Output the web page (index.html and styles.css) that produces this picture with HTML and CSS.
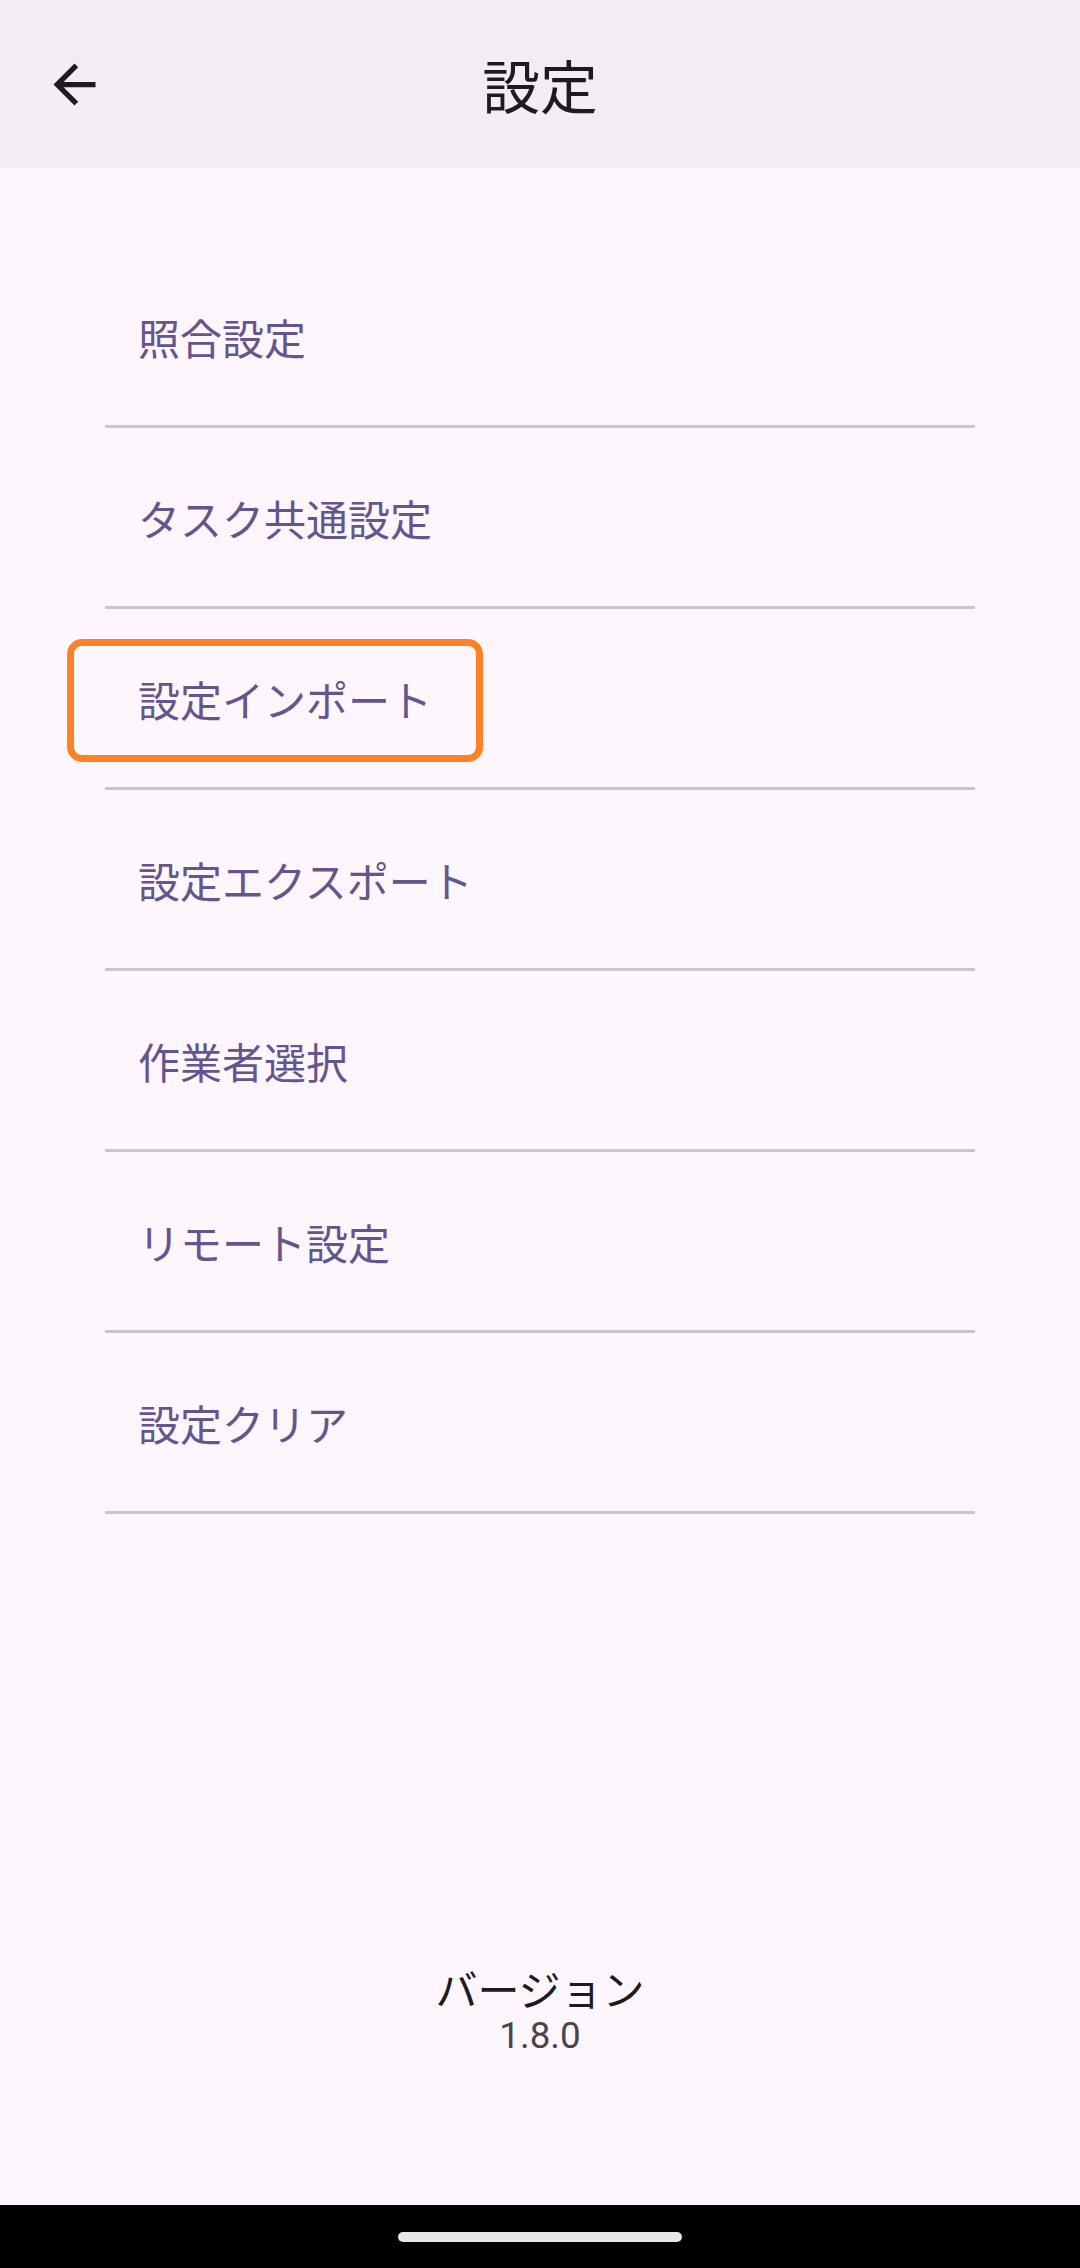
FILE: index.html
```html
<!DOCTYPE html>
<html lang="ja">
<head>
<meta charset="utf-8">
<title>設定</title>
<link rel="stylesheet" href="styles.css">
</head>
<body>
<div class="screen">
  <header class="appbar">
    <button class="nav-btn" aria-label="戻る">
      <svg viewBox="0 0 24 24" width="63" height="63"><path d="M20 11H7.83l5.59-5.59L12 4l-8 8 8 8 1.41-1.41L7.83 13H20v-2z" fill="#1d1b20"/></svg>
    </button>
    <h1 class="title">設定</h1>
  </header>
  <main class="content">
    <ul class="menu">
      <li class="item">照合設定</li>
      <li class="item">タスク共通設定</li>
      <li class="item highlighted">設定インポート<span class="mark"></span></li>
      <li class="item">設定エクスポート</li>
      <li class="item">作業者選択</li>
      <li class="item">リモート設定</li>
      <li class="item">設定クリア</li>
    </ul>
    <div class="version">
      <div class="version-label">バージョン</div>
      <div class="version-number">1.8.0</div>
    </div>
  </main>
  <div class="navbar"><div class="handle"></div></div>
</div>
</body>
</html>
```

FILE: styles.css
```css
* { box-sizing: border-box; }
html, body { margin: 0; padding: 0; }
body {
  width: 1080px;
  height: 2268px;
  background: #fdf7fd;
  font-family: "Roboto", "Noto Sans CJK JP", sans-serif;
  overflow: hidden;
}
.screen {
  display: flex;
  flex-direction: column;
  height: 2268px;
}
.appbar {
  height: 168px;
  flex: 0 0 168px;
  background: #f1edf2;
  display: flex;
  align-items: center;
  position: relative;
}
.nav-btn {
  border: 0;
  background: none;
  padding: 0;
  margin-left: 43px;
  width: 63px;
  height: 63px;
  display: flex;
}
.title {
  position: absolute;
  left: 0;
  right: 0;
  top: 0;
  bottom: 0;
  margin: 0;
  display: flex;
  align-items: center;
  justify-content: center;
  font-family: "Noto Sans CJK JP", sans-serif;
  font-weight: 400;
  font-size: 57.75px;
  color: #1d1b20;
  pointer-events: none;
}
.content {
  flex: 1;
  display: flex;
  flex-direction: column;
  justify-content: space-between;
  padding-top: 79px;
}
.menu {
  list-style: none;
  margin: 0 105px;
  padding: 0;
}
.item {
  position: relative;
  height: 181px;
  display: flex;
  align-items: center;
  padding-left: 33px;
  border-bottom: 3px solid #cac4d0;
  font-family: "Noto Sans CJK JP", sans-serif;
  font-size: 42px;
  color: #65558f;
}
.mark {
  position: absolute;
  left: -38px;
  top: 30px;
  width: 416px;
  height: 123px;
  border: 7px solid #ff8125;
  border-radius: 15px;
}
.version {
  text-align: center;
  padding-bottom: 147px;
}
.version-label {
  font-family: "Noto Sans CJK JP", sans-serif;
  font-size: 42px;
  line-height: 52px;
  color: #1d1b20;
}
.version-number {
  font-family: "Roboto", sans-serif;
  font-size: 36.75px;
  line-height: 44px;
  color: #49454f;
}
.navbar {
  flex: 0 0 63px;
  height: 63px;
  background: #000;
  display: flex;
  justify-content: center;
  align-items: center;
}
.handle {
  width: 284px;
  height: 10px;
  border-radius: 5px;
  background: #e6e6e6;
}
```
